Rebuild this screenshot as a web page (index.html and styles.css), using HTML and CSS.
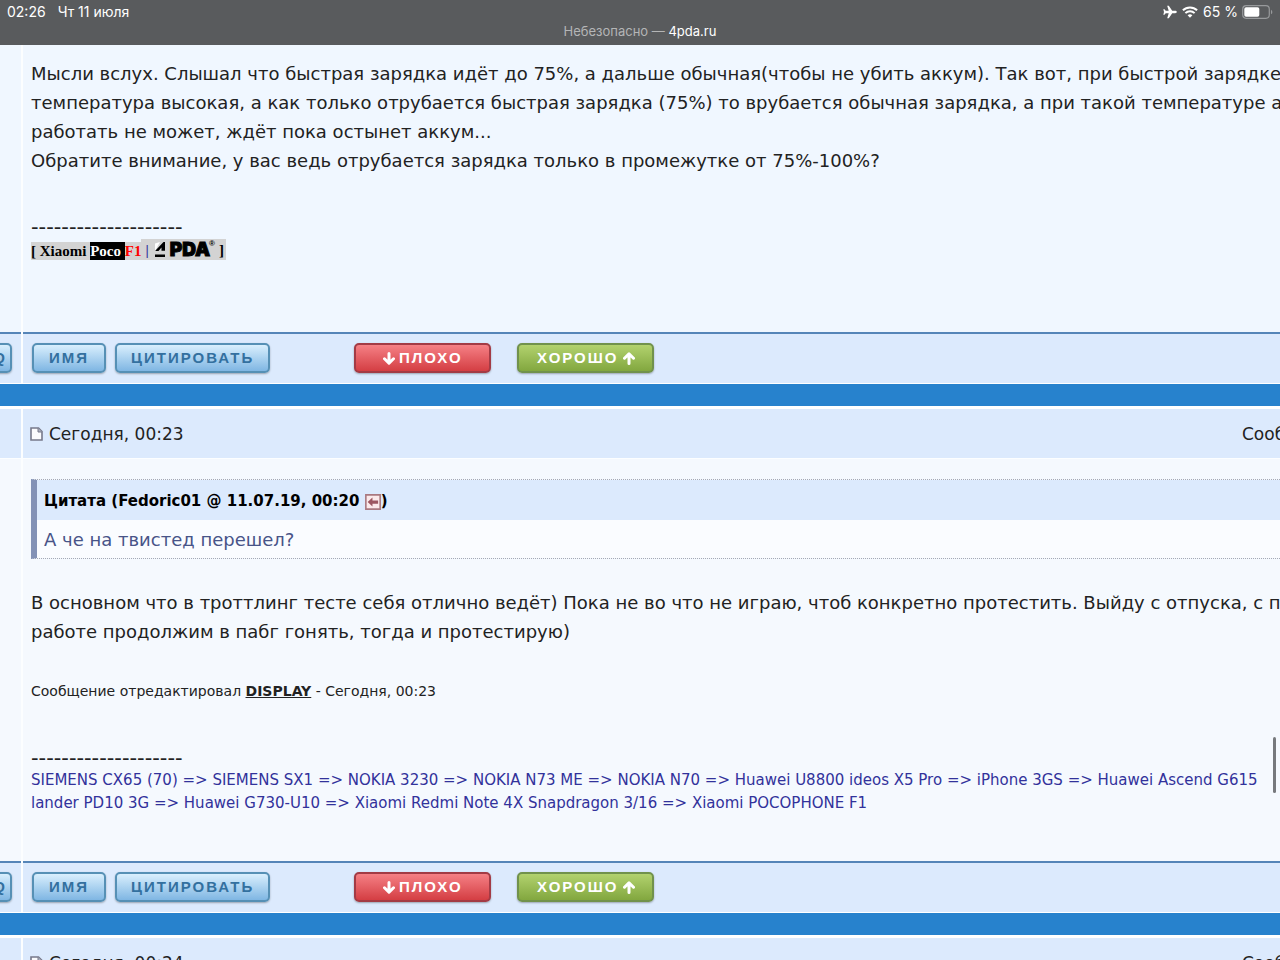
FILE: index.html
```html
<!DOCTYPE html>
<html lang="ru">
<head>
    <meta charset="UTF-8">
    <meta name="viewport" content="width=device-width, initial-scale=1.0">
    <title>4pda.ru</title>
    <link rel="stylesheet" href="styles.css">
</head>
<body>
    <header class="browser-bar">
        <div class="status-row">
            <div class="status-left">
                <span>02:26</span>
                <span>Чт 11 июля</span>
            </div>
            <div class="status-right">
                <svg class="icon-plane" width="14" height="14" viewBox="0 0 14 14" fill="#fff">
                    <path d="M13.800 7c0-.7-.7-1.200-1.600-1.200H9.200L5.800.800H4.200L5.700 5.800H2.700L1.500 4.200H.3L1 7 .3 9.800h1.200L2.700 8.200h3l-1.500 5h1.600l3.400-5h3c.9 0 1.600-.5 1.600-1.200z"/>
                </svg>
                <svg class="icon-wifi" width="16" height="12" viewBox="0 0 16 12" fill="none" stroke="#fff" stroke-width="2">
                    <path d="M.9 4.300a10.200 10.200 0 0 1 14.200 0M3.400 7.100a6.600 6.600 0 0 1 9.200 0"/>
                    <path d="M8 11.800 5.600 9.300a3.500 3.500 0 0 1 4.800 0z" fill="#fff" stroke="none"/>
                </svg>
                <span>65 %</span>
                <svg class="icon-battery" width="31" height="14" viewBox="0 0 31 14">
                    <rect x=".7" y=".7" width="26.600" height="12.600" rx="3.500" fill="none" stroke="#97999b" stroke-width="1.200"/>
                    <rect x="2.300" y="2.300" width="15" height="9.400" rx="1.800" fill="#fff"/>
                    <path d="M29 4.700c1.800.8 1.800 3.800 0 4.600z" fill="#97999b"/>
                </svg>
            </div>
        </div>
        <div class="address">Небезопасно — <span class="host">4pda.ru</span></div>
    </header>

    <main>
        <article class="post">
            <div class="side"></div>
            <div class="post-body first">
                <p class="text">Мысли вслух. Слышал что быстрая зарядка идёт до 75%, а дальше обычная(чтобы не убить аккум). Так вот, при быстрой зарядке<br>
                температура высокая, а как только отрубается быстрая зарядка (75%) то врубается обычная зарядка, а при такой температуре аккум<br>
                работать не может, ждёт пока остынет аккум...<br>
                Обратите внимание, у вас ведь отрубается зарядка только в промежутке от 75%-100%?</p>
                <div class="signature">
                    <div class="dashes">--------------------</div>
                    <div class="badge">
                        <span class="badge-name">[ Xiaomi </span><span class="badge-poco">Poco </span><span class="badge-f1">F1</span>
                        <span class="badge-logo">
                            <span class="bar">|</span>
                            <svg width="10" height="15" viewBox="0 0 10 15">
                                <path d="M0 9 8.500 0H10v8.800H6.500V5.500L3.500 9zM0 12.600h10V15H0z"/>
                                <path d="M0 9V1.500L5 0z" fill="#fff"/>
                            </svg>
                            <span class="pda">PDA</span><span class="reg">®</span>
                            <span class="end">]</span>
                        </span>
                    </div>
                </div>
            </div>
            <div class="side foot"><button class="btn blue">ICQ</button></div>
            <div class="foot actions">
                <button class="btn blue">ИМЯ</button>
                <button class="btn blue">ЦИТИРОВАТЬ</button>
                <button class="btn vote red">
                    <svg width="12" height="13" viewBox="0 0 12 13"><path d="M6 1.500v9M1.500 6.800 6 11.200l4.500-4.400"/></svg>
                    ПЛОХО
                </button>
                <button class="btn vote green">
                    ХОРОШО
                    <svg width="12" height="13" viewBox="0 0 12 13"><path d="M6 11.500v-9M1.500 6.200 6 1.800l4.500 4.400"/></svg>
                </button>
            </div>
        </article>

        <div class="divider"></div>

        <article class="post alt">
            <div class="side head"></div>
            <div class="head">
                <svg width="13" height="14" viewBox="0 0 13 14"><path d="M1 1h7.500L12 4.500V13H1z" fill="#fbfbfd" stroke="#77798a" stroke-width="1.600"/><path d="M8 1v4h4" fill="#aeb2c0" stroke="#77798a"/></svg>
                <span>Сегодня, 00:23</span>
                <a class="post-link" href="#">Сообщение</a>
            </div>
            <div class="side"></div>
            <div class="post-body second">
                <blockquote class="quote">
                    <div class="quote-title">Цитата (Fedoric01 @ 11.07.19, 00:20 <svg width="16" height="16" viewBox="0 0 15 15"><path d="M.8.800h13.400v13.400H.8z" fill="#fbe9ea" stroke="#a9787f" stroke-width="1.500"/><path d="M2.500 7.500 7 3.300v2.800h5.300v3H7v2.700z" fill="#9c5660"/></svg>)</div>
                    <div class="quote-text">А че на твистед перешел?</div>
                </blockquote>
                <p class="text">В основном что в троттлинг тесте себя отлично ведёт) Пока не во что не играю, чтоб конкретно протестить. Выйду с отпуска, с пацанами на<br>
                работе продолжим в пабг гонять, тогда и протестирую)</p>
                <p class="edited">Сообщение отредактировал <a href="#">DISPLAY</a> - Сегодня, 00:23</p>
                <div class="signature">
                    <div class="dashes">--------------------</div>
                    <p class="devices">SIEMENS CX65 (70) =&gt; SIEMENS SX1 =&gt; NOKIA 3230 =&gt; NOKIA N73 ME =&gt; NOKIA N70 =&gt; Huawei U8800 ideos X5 Pro =&gt; iPhone 3GS =&gt; Huawei Ascend G615<br>
                    lander PD10 3G =&gt; Huawei G730-U10 =&gt; Xiaomi Redmi Note 4X Snapdragon 3/16 =&gt; Xiaomi POCOPHONE F1</p>
                </div>
            </div>
            <div class="side foot"><button class="btn blue">ICQ</button></div>
            <div class="foot actions">
                <button class="btn blue">ИМЯ</button>
                <button class="btn blue">ЦИТИРОВАТЬ</button>
                <button class="btn vote red">
                    <svg width="12" height="13" viewBox="0 0 12 13"><path d="M6 1.500v9M1.500 6.800 6 11.200l4.500-4.400"/></svg>
                    ПЛОХО
                </button>
                <button class="btn vote green">
                    ХОРОШО
                    <svg width="12" height="13" viewBox="0 0 12 13"><path d="M6 11.500v-9M1.500 6.200 6 1.800l4.500 4.400"/></svg>
                </button>
            </div>
        </article>

        <div class="divider"></div>

        <article class="post">
            <div class="side head"></div>
            <div class="head">
                <svg width="13" height="14" viewBox="0 0 13 14"><path d="M1 1h7.500L12 4.500V13H1z" fill="#fbfbfd" stroke="#77798a" stroke-width="1.600"/><path d="M8 1v4h4" fill="#aeb2c0" stroke="#77798a"/></svg>
                <span>Сегодня, 00:24</span>
                <a class="post-link" href="#">Сообщение</a>
            </div>
        </article>
    </main>
    <div class="scroll-thumb"></div>
</body>
</html>
```
FILE: styles.css
```css
* {
    box-sizing: border-box;
}
body {
    margin: 0;
    height: 100vh;
    overflow: hidden;
    background: #fff;
    color: #222;
    font-family: Verdana, "DejaVu Sans", sans-serif;
    font-size: 18px;
}
p, blockquote {
    margin: 0;
}

/* tablet status bar */
.browser-bar {
    height: 45px;
    background: #595b5d;
    color: #fff;
    font-family: Inter, sans-serif;
    font-size: 13px;
}
.status-row {
    display: flex;
    justify-content: space-between;
    padding: 3px 7px 2px;
    font-size: 14px;
    line-height: 18px;
}
.status-left {
    display: flex;
    gap: 12px;
}
.status-right {
    display: flex;
    align-items: center;
    gap: 5px;
}
.icon-battery {
    margin-left: -1px;
}
.address {
    line-height: 16px;
    text-align: center;
    color: #b4b5b6;
}
.host {
    color: #fff;
}

/* posts */
.post {
    display: grid;
    grid-template-columns: 21px minmax(0, 1fr);
    column-gap: 2px;
    background: #fcfeff;
    white-space: nowrap;
}
.post > div {
    background: #f0f7ff;
    overflow: hidden;
}
.post.alt > div {
    background: #f5f9fe;
}
.post > .head, .post.alt > .head,
.post > .foot, .post.alt > .foot {
    background: #dceafd;
}
.head {
    display: flex;
    align-items: center;
    gap: 6px;
    height: 49px;
    padding-left: 7px;
    font-size: 17px;
}
.post-link {
    flex: none;
    width: 38px;
    margin-left: auto;
    color: inherit;
    text-decoration: none;
}
.post.alt > .head {
    margin-bottom: 1px;
}
.post-body {
    padding-left: 8px;
}
.first {
    padding-top: 14px;
    padding-bottom: 72px;
}
.second {
    padding-top: 20px;
    padding-bottom: 46px;
}
.text {
    line-height: 29px;
}
.signature {
    margin-top: 41px;
    font-size: 15px;
}
.dashes {
    font-size: 21px;
    line-height: 22px;
}

/* signature badge */
.badge {
    display: flex;
    align-items: flex-end;
    height: 22px;
    font: bold 15px/18px "Liberation Serif", serif;
    white-space: pre;
}
.badge-name, .badge-f1 {
    background: #d3d3d3;
    color: #000;
}
.badge-poco {
    background: #000;
    color: #fff;
}
.badge-f1 {
    color: #f00;
}
.badge-logo {
    display: flex;
    align-items: center;
    height: 21px;
    padding: 0 2px 0 4px;
    background: #d3d3d3;
    color: #000;
}
.bar {
    margin-right: 6px;
    color: #32329b;
}
.pda {
    margin-left: 5px;
    font: 900 19px/20px Inter, sans-serif;
    -webkit-text-stroke: 1px #000;
}
.reg {
    align-self: flex-start;
    margin-left: -1px;
    font: bold 8px/10px "Liberation Sans", sans-serif;
}
.end {
    margin-left: 4px;
}

/* button row under a post */
.foot {
    display: flex;
    align-items: flex-start;
    height: 51px;
    padding-top: 9px;
    border-top: 2px solid #5585b8;
}
.side.foot {
    justify-content: flex-end;
    padding-right: 9px;
}
.actions {
    padding-left: 9px;
}
.btn {
    display: flex;
    flex: none;
    align-items: center;
    justify-content: center;
    min-width: 74px;
    height: 30px;
    margin: 0 9px 0 0;
    padding: 0 14px;
    border: 2px solid;
    border-radius: 5px;
    font: bold 15px/26px "Liberation Sans", Arial, sans-serif;
    letter-spacing: 2px;
    box-shadow: 0 1px 2px rgba(0, 0, 0, 0.3);
}
.side .btn {
    min-width: 0;
    margin: 0;
    padding: 0 3px;
}
.blue {
    border-color: #5690b5;
    background: linear-gradient(#d9effd, #7fb6e3);
    color: #33709f;
}
.vote {
    gap: 4px;
    width: 137px;
    color: #fff;
}
.vote svg {
    fill: none;
    stroke: #fff;
    stroke-width: 3;
    stroke-linecap: round;
    stroke-linejoin: round;
}
.red {
    margin-left: 75px;
    margin-right: 26px;
    border-color: #a33b45;
    background: linear-gradient(#f58085, #d43e43);
}
.green {
    border-color: #71924c;
    background: linear-gradient(#b2d26e, #82a73f);
}
.divider {
    height: 26px;
    border-top: 1px solid #fff;
    border-bottom: 3px solid #fff;
    background: #2782cd;
}

/* quote */
.quote {
    margin-bottom: 29px;
    border: 1px dotted #a5a9b5;
    border-left: 6px solid #8392b6;
    border-right: 0;
}
.quote-title {
    height: 40px;
    padding-left: 7px;
    background: #dceafd;
    color: #000;
    font-size: 15px;
    font-weight: bold;
    line-height: 42px;
}
.quote-title svg {
    vertical-align: -4px;
}
.quote-text {
    height: 38px;
    padding-left: 7px;
    background: #fafcff;
    color: #485488;
    line-height: 40px;
}
.edited {
    margin-top: 35px;
    font-size: 14px;
    line-height: 20px;
}
.edited a {
    color: #222;
    font-weight: bold;
}
.second .signature {
    margin-top: 46px;
}
.devices {
    color: #32329b;
    line-height: 23px;
}
.scroll-thumb {
    position: fixed;
    top: 737px;
    right: 4px;
    width: 3px;
    height: 56px;
    border-radius: 2px;
    background: #77797d;
}
```
